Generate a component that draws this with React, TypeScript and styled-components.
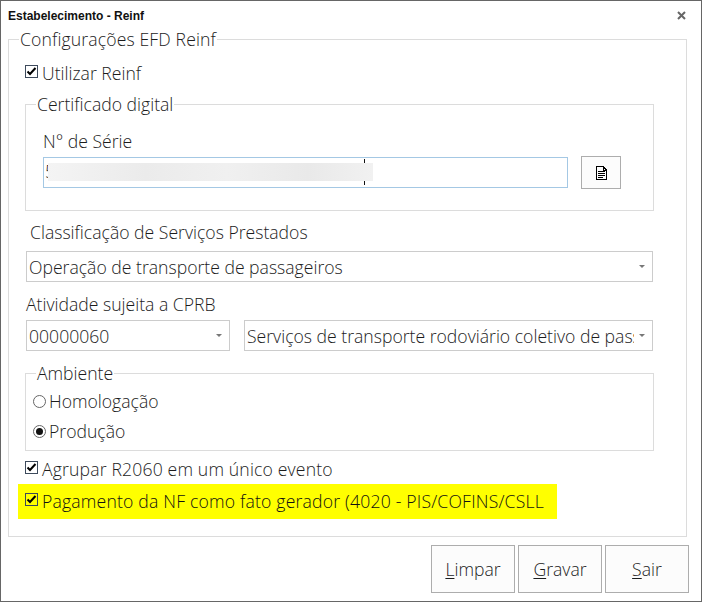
import React from "react";
import styled, { createGlobalStyle } from "styled-components";

const GlobalStyle = createGlobalStyle`
	html, body {
		margin: 0;
		padding: 0;
		background: #fff;
	}
	body {
		font-family: "Open Sans", "Noto Sans", sans-serif;
		font-weight: 300;
		color: #1c1c1c;
	}
`;

const TEXT_SIZE = "17.6px";

const Window = styled.div`
	width: 702px;
	height: 602px;
	box-sizing: border-box;
	border: 1px solid #666;
	background: #fff;
	padding: 0 14px 0 7px;
	display: flex;
	flex-direction: column;
`;

const TitleBar = styled.div`
	height: 26px;
	flex: none;
	display: flex;
	align-items: center;
	justify-content: space-between;
`;

const Title = styled.span`
	font-family: "Liberation Sans", sans-serif;
	font-size: 12px;
	font-weight: 700;
	color: #111;
	margin-top: 3px;
`;

const CloseSvg = styled.svg`
	margin-top: 3px;
	margin-right: 1px;
`;

const CloseIcon = () => (
	<CloseSvg width="9" height="9" viewBox="0 0 9 9">
		<path d="M1 1 L8 8 M8 1 L1 8" stroke="#666" strokeWidth="2" fill="none" />
	</CloseSvg>
);

const Group = styled.fieldset<{ $height: number; $top?: number }>`
	margin: ${({ $top }) => $top ?? 0}px 0 0;
	padding: 0;
	min-width: 0;
	height: ${({ $height }) => $height}px;
	box-sizing: border-box;
	border: 1px solid #dcdcdc;
	flex: none;
`;

const Legend = styled.legend<{ $spacing?: number }>`
	margin-left: 10px;
	padding: 0 1px;
	font-size: ${TEXT_SIZE};
	letter-spacing: ${({ $spacing }) => $spacing ?? 0}px;
	line-height: 24px;
	height: 24px;
`;

const OuterBody = styled.div`
	padding: 10px 32px 0 16px;
	display: flex;
	flex-direction: column;
`;

const CheckRow = styled.label<{ $top?: number; $spacing?: number }>`
	display: flex;
	align-items: center;
	height: 24px;
	margin-top: ${({ $top }) => $top ?? 0}px;
	font-size: ${TEXT_SIZE};
	letter-spacing: ${({ $spacing }) => $spacing ?? 0}px;
	gap: 4px;
`;

const CheckBox = styled.span`
	width: 13px;
	height: 13px;
	box-sizing: border-box;
	border: 1px solid #3d4a5c;
	background: transparent;
	flex: none;
	display: flex;
	align-items: center;
	justify-content: center;
	margin-top: -3px;
`;

const Checked = () => (
	<CheckBox>
		<svg width="11" height="11" viewBox="0 0 11 11">
			<path d="M1.5 5.5 L4 8 L9.5 2" stroke="#000" strokeWidth="2" fill="none" />
		</svg>
	</CheckBox>
);

const HighlightRow = styled.div`
	margin: 3px 0 0 -7px;
	width: 539px;
	height: 35px;
	background: #ff0;
	display: flex;
	align-items: center;
	padding: 0 0 2px 7px;
	box-sizing: border-box;
	color: #111;
`;

const SerieBody = styled.div`
	padding: 13px 32px 0 17px;
	display: flex;
	flex-direction: column;
`;

const FieldLabel = styled.div<{ $indent?: number; $top?: number }>`
	font-size: ${TEXT_SIZE};
	line-height: 24px;
	height: 24px;
	margin-left: ${({ $indent }) => $indent ?? 0}px;
	margin-top: ${({ $top }) => $top ?? 0}px;
`;

const SerieRow = styled.div`
	display: flex;
	align-items: center;
	gap: 13px;
	margin-top: 3px;
`;

const SerieInput = styled.div`
	position: relative;
	width: 525px;
	height: 31px;
	box-sizing: border-box;
	border: 1px solid #a4c8e4;
	background: #fff;
	overflow: hidden;
	font-size: ${TEXT_SIZE};
	line-height: 27px;
	padding-left: 1px;
`;

const BlurMask = styled.div`
	position: absolute;
	left: 4px;
	top: 5px;
	width: 325px;
	height: 18px;
	background: linear-gradient(90deg, #f4f4f4 0%, #ebebeb 30%, #f0f0f0 55%, #e9e9e9 80%, #f1f1f1 100%);
`;

const CaretTick = styled.span<{ $top: number }>`
	position: absolute;
	left: 320px;
	top: ${({ $top }) => $top}px;
	width: 1px;
	height: 4px;
	background: #111;
`;

const FileButton = styled.button`
	width: 40px;
	height: 33px;
	box-sizing: border-box;
	border: 1px solid #adadad;
	background: #fcfcfc;
	padding: 0;
	display: flex;
	align-items: center;
	justify-content: center;
`;

const FileIcon = () => (
	<svg width="11" height="14" viewBox="0 0 11 14" shapeRendering="crispEdges">
		<path d="M.5.5 H7 L10.5 4 V13.5 H.5 Z M7 .5 V4 H10.5" stroke="#000" fill="none" />
		<path d="M2 5.5 H9 M2 7.5 H9 M2 9.5 H9 M2 11.5 H7" stroke="#000" fill="none" />
	</svg>
);

const SelectBox = styled.div<{ $width: number; $top?: number; $left?: number }>`
	width: ${({ $width }) => $width}px;
	height: 31px;
	margin-top: ${({ $top }) => $top ?? 0}px;
	margin-left: ${({ $left }) => $left ?? 0}px;
	box-sizing: border-box;
	border: 1px solid #ccc;
	background: #fff;
	display: flex;
	align-items: center;
	padding: 0 7px 0 2px;
	font-size: ${TEXT_SIZE};
`;

const SelectText = styled.span`
	flex: 1;
	overflow: hidden;
	white-space: nowrap;
	margin-right: 5px;
`;

const Arrow = styled.span`
	flex: none;
	width: 0;
	height: 0;
	border-left: 3px solid transparent;
	border-right: 3px solid transparent;
	border-top: 3px solid #777;
`;

const SelectRow = styled.div`
	display: flex;
	gap: 14px;
	margin: 4px 0 0 1px;
`;

const RadioRow = styled.label`
	display: flex;
	align-items: center;
	height: 30px;
	font-size: ${TEXT_SIZE};
	gap: 3px;
	margin-left: 7px;
`;

const RadioDot = styled.span<{ $on?: boolean }>`
	width: 13px;
	height: 13px;
	box-sizing: border-box;
	border: 1px solid #666;
	border-radius: 50%;
	background: #fff;
	flex: none;
	display: flex;
	align-items: center;
	justify-content: center;
	&::after {
		content: "";
		width: 7px;
		height: 7px;
		border-radius: 50%;
		background: ${({ $on }) => ($on ? "#111" : "transparent")};
	}
`;

const AmbienteBody = styled.div`
	padding-top: 1px;
`;

const Footer = styled.div`
	display: flex;
	justify-content: flex-end;
	gap: 3px;
	margin-top: 8px;
	margin-right: -2px;
`;

const FooterButton = styled.button`
	width: 84px;
	height: 48px;
	box-sizing: border-box;
	border: 1px solid #adadad;
	background: #fcfcfc;
	color: #1c1c1c;
	font-family: inherit;
	font-weight: 300;
	font-size: ${TEXT_SIZE};
	padding: 0;

	u {
		text-underline-offset: 2px;
	}
`;

export default function App() {
	return (
		<>
			<GlobalStyle />
			<Window>
				<TitleBar>
					<Title>Estabelecimento - Reinf</Title>
					<CloseIcon />
				</TitleBar>
				<Group $height={510}>
					<Legend $spacing={0.13}>Configurações EFD Reinf</Legend>
					<OuterBody>
						<CheckRow>
							<Checked />
							Utilizar Reinf
						</CheckRow>
						<Group $height={119} $top={7}>
							<Legend>Certificado digital</Legend>
							<SerieBody>
								<FieldLabel>N° de Série</FieldLabel>
								<SerieRow>
									<SerieInput>
										5
										<BlurMask />
										<CaretTick $top={1} />
										<CaretTick $top={23} />
									</SerieInput>
									<FileButton>
										<FileIcon />
									</FileButton>
								</SerieRow>
							</SerieBody>
						</Group>
						<FieldLabel $indent={5} $top={9}>Classificação de Serviços Prestados</FieldLabel>
						<SelectBox $width={627} $top={7} $left={1}>
							<SelectText>Operação de transporte de passageiros</SelectText>
							<Arrow />
						</SelectBox>
						<FieldLabel $indent={1} $top={10}>Atividade sujeita a CPRB</FieldLabel>
						<SelectRow>
							<SelectBox $width={204}>
								<SelectText>00000060</SelectText>
								<Arrow />
							</SelectBox>
							<SelectBox $width={409}>
								<SelectText>Serviços de transporte rodoviário coletivo de passageiros</SelectText>
								<Arrow />
							</SelectBox>
						</SelectRow>
						<Group $height={90} $top={10}>
							<Legend>Ambiente</Legend>
							<AmbienteBody>
								<RadioRow>
									<RadioDot />
									Homologação
								</RadioRow>
								<RadioRow>
									<RadioDot $on />
									Produção
								</RadioRow>
							</AmbienteBody>
						</Group>
						<CheckRow $top={6} $spacing={0.16}>
							<Checked />
							Agrupar R2060 em um único evento
						</CheckRow>
						<HighlightRow>
							<CheckRow $spacing={0.19}>
								<Checked />
								Pagamento da NF como fato gerador (4020 - PIS/COFINS/CSLL
							</CheckRow>
						</HighlightRow>
					</OuterBody>
				</Group>
				<Footer>
					<FooterButton><u>L</u>impar</FooterButton>
					<FooterButton><u>G</u>ravar</FooterButton>
					<FooterButton><u>S</u>air</FooterButton>
				</Footer>
			</Window>
		</>
	);
}
